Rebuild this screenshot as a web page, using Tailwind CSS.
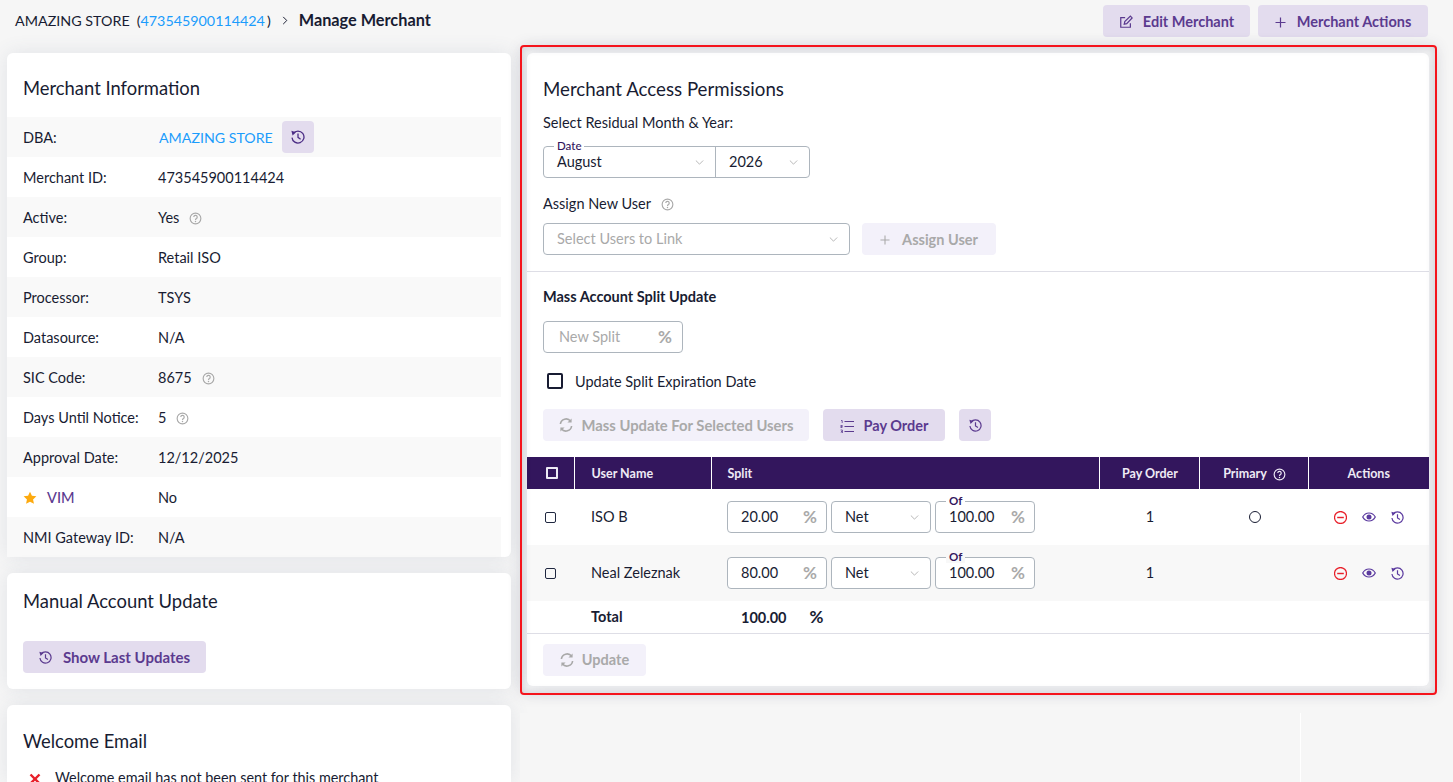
<!DOCTYPE html>
<html>
<head>
<meta charset="utf-8">
<script src="https://cdn.jsdelivr.net/npm/@tailwindcss/browser@4"></script>
</head>
<body class="m-0 h-[782px] overflow-hidden bg-[#f6f6f6] font-['Lato',sans-serif] text-[14.5px] text-[#181c32]">
<svg width="0" height="0" class="absolute">
<defs>
<symbol id="hist" viewBox="1 1 14 14"><path d="M3.200 4.400A6 6 0 1 1 2 8.600" fill="none" stroke="currentColor" stroke-width="1.300"/><path d="M1.400 1.800l4.600 1.400-3.400 3.200z" fill="currentColor"/><path d="M8 4.600v3.800l2.600 1.800" fill="none" stroke="currentColor" stroke-width="1.300"/></symbol>
<symbol id="help" viewBox="0 0 16 16"><circle cx="8" cy="8" r="6.600" fill="none" stroke="currentColor" stroke-width="1.400"/><path d="M5.900 6.200a2.100 2.100 0 1 1 3.300 1.800c-.8.500-1.200.9-1.200 1.700" fill="none" stroke="currentColor" stroke-width="1.400"/><circle cx="8" cy="11.700" r=".9" fill="currentColor"/></symbol>
<symbol id="chev" viewBox="0 0 10 6"><path d="M.6.600 5 5 9.400.6" fill="none" stroke="currentColor" stroke-width="1"/></symbol>
<symbol id="sync" viewBox="1 1 14 14"><path d="M2.400 7A5.700 5.700 0 0 1 12.600 4.200M13.600 9a5.700 5.700 0 0 1-10.200 2.800" fill="none" stroke="currentColor" stroke-width="1.600"/><path d="M13.600 1.400v4.200H9.400zM2.400 14.600v-4.200h4.200z" fill="currentColor"/></symbol>
<symbol id="minus" viewBox="0.700 0.700 12.600 12.600"><circle cx="7" cy="7" r="5.800" fill="none" stroke="currentColor" stroke-width="1.200"/><path d="M3.800 7h6.400" stroke="currentColor" stroke-width="1.400"/></symbol>
<symbol id="eye" viewBox="0 0 14 10"><path d="M.7 5C2.200 2.300 4.400 1 7 1s4.800 1.300 6.300 4C11.800 7.700 9.600 9 7 9S2.200 7.700.7 5z" fill="none" stroke="currentColor" stroke-width="1.200"/><circle cx="7" cy="5" r="2.500" fill="currentColor"/></symbol>
</defs>
</svg>

<header class="flex h-[53px] items-start justify-between pl-[15px] pr-[25px]">
  <div class="flex h-[41px] items-center text-[14.300px]">
    <span>AMAZING STORE</span><span class="ml-[7px]">(</span><span class="text-[#1b9cfc]">473545900114424</span><span class="ml-[2px]">)</span>
    <svg class="mx-[11px] h-[9px] w-[6px] text-[#181c32]" viewBox="0 0 6 10"><path d="M1 1l4 4-4 4" fill="none" stroke="currentColor" stroke-width="1.100"/></svg>
    <span class="text-[16.300px] font-bold">Manage Merchant</span>
  </div>
  <div class="mt-[5px] flex gap-2">
    <button class="flex h-[32px] w-[147px] items-center justify-center gap-[10px] rounded-[4px] bg-[#e3dcee] pt-[2px] font-bold text-[#5b3a8f]">
      <svg class="h-[14px] w-[14px]" viewBox="0 0 16 16" fill="none" stroke="currentColor" stroke-width="1.400"><path d="M13 9.500V14H2V3h5"/><path d="M6 10.500l.6-3L13 1.300l2 2L8.800 9.800z"/></svg>
      Edit Merchant</button>
    <button class="flex h-[32px] w-[170px] items-center justify-center gap-[11px] rounded-[4px] bg-[#e3dcee] pt-[2px] font-bold text-[#5b3a8f]">
      <svg class="h-[11px] w-[11px]" viewBox="0 0 11 11" stroke="currentColor" stroke-width="1.200"><path d="M5.500.5v10M.5 5.500h10"/></svg>
      Merchant Actions</button>
  </div>
</header>

<main class="grid grid-cols-[504px_902px] gap-4 pl-[7px]">
  <div class="flex flex-col gap-4">
    <section class="h-[504px] rounded-[6px] bg-white shadow-[0_0_20px_rgba(76,87,125,0.12)]">
      <h2 class="flex h-[64px] items-center pl-4 pt-[8px] text-[18.400px] font-normal">Merchant Information</h2>
      <div class="mr-[10px]">
        <div class="flex h-[40px] items-center bg-[#f9f9f9] pl-4 pt-[2px]"><span class="w-[136px]">DBA:</span><span class="text-[14.200px] text-[#1b9cfc]">AMAZING STORE</span><span class="-mt-[2px] ml-[9px] flex h-[32px] w-[32px] items-center justify-center rounded-[4px] bg-[#e3dcee] text-[#4b2c85]"><svg class="h-[14px] w-[14px]"><use href="#hist"/></svg></span></div>
        <div class="flex h-[40px] items-center pl-4 pt-[2px]"><span class="w-[135px]">Merchant ID:</span><span>473545900114424</span></div>
        <div class="flex h-[40px] items-center bg-[#f9f9f9] pl-4 pt-[2px]"><span class="w-[135px]">Active:</span><span>Yes</span><svg class="ml-[10px] h-[13px] w-[13px] text-[#a9a9a9]"><use href="#help"/></svg></div>
        <div class="flex h-[40px] items-center pl-4 pt-[2px]"><span class="w-[135px]">Group:</span><span>Retail ISO</span></div>
        <div class="flex h-[40px] items-center bg-[#f9f9f9] pl-4 pt-[2px]"><span class="w-[135px]">Processor:</span><span>TSYS</span></div>
        <div class="flex h-[40px] items-center pl-4 pt-[2px]"><span class="w-[135px]">Datasource:</span><span>N/A</span></div>
        <div class="flex h-[40px] items-center bg-[#f9f9f9] pl-4 pt-[2px]"><span class="w-[135px]">SIC Code:</span><span>8675</span><svg class="ml-[10px] h-[13px] w-[13px] text-[#a9a9a9]"><use href="#help"/></svg></div>
        <div class="flex h-[40px] items-center pl-4 pt-[2px]"><span class="w-[135px]">Days Until Notice:</span><span>5</span><svg class="ml-[10px] h-[13px] w-[13px] text-[#a9a9a9]"><use href="#help"/></svg></div>
        <div class="flex h-[40px] items-center bg-[#f9f9f9] pl-4 pt-[2px]"><span class="w-[135px]">Approval Date:</span><span>12/12/2025</span></div>
        <div class="flex h-[40px] items-center pl-4 pt-[2px]"><span class="flex w-[135px] items-center gap-[10px] font-medium text-[#5b3a8f]"><svg class="h-[14px] w-[14px] text-[#fdaa0f]" viewBox="0 0 16 16"><path d="M8 .8l2.200 4.700 5.100.6-3.800 3.500 1 5.100L8 12.200l-4.500 2.500 1-5.100L.7 6.100l5.100-.6z" fill="currentColor"/></svg>VIM</span><span>No</span></div>
        <div class="flex h-[40px] items-center bg-[#f9f9f9] pl-4 pt-[2px]"><span class="w-[135px]">NMI Gateway ID:</span><span>N/A</span></div>
      </div>
    </section>
    <section class="h-[116px] rounded-[6px] bg-white pl-4 shadow-[0_0_20px_rgba(76,87,125,0.12)]">
      <h2 class="flex h-[56px] items-center pt-[2px] text-[18.400px] font-normal">Manual Account Update</h2>
      <button class="mt-[12px] flex h-[32px] w-[183px] items-center justify-center gap-[11px] rounded-[4px] bg-[#e3dcee] text-[15px] font-bold text-[#5b3a8f]"><svg class="h-[13px] w-[13px]"><use href="#hist"/></svg>Show Last Updates</button>
    </section>
    <section class="h-[77px] overflow-hidden rounded-t-[6px] bg-white pl-4 shadow-[0_0_20px_rgba(76,87,125,0.12)]">
      <h2 class="flex h-[64px] items-center pt-[10px] text-[18.400px] font-normal">Welcome Email</h2>
      <div class="flex h-[13px] items-start gap-[14px] pl-[6px]">
        <svg class="mt-[4px] h-[12px] w-[12px] shrink-0 text-[#e8202a]" viewBox="0 0 12 12"><path d="M1.500 1.500l9 9m0-9l-9 9" stroke="currentColor" stroke-width="2.400"/></svg>
        <span class="pt-[1px] text-[14.400px] leading-[16px]">Welcome email has not been sent for this merchant</span>
      </div>
    </section>
  </div>

  <section class="h-[633px] rounded-[6px] bg-white shadow-[0_0_20px_rgba(76,87,125,0.12)]">
    <div class="px-4">
      <h2 class="flex h-[64px] items-center pt-[8px] text-[18.700px] font-normal">Merchant Access Permissions</h2>
      <p class="-mt-[5px] flex h-[20px] items-center pt-[2px]">Select Residual Month &amp; Year:</p>
      <div class="relative mt-[14px] flex h-[32px] w-[267px] rounded-[4px] border border-[#adb5bd]">
        <span class="absolute -top-[7px] left-[10px] bg-white px-[3px] text-[11.500px] leading-[12px] font-medium text-[#33165d]">Date</span>
        <div class="flex w-[172px] items-center justify-between border-r border-[#adb5bd] pl-[13px] pr-[11px]"><span>August</span><svg class="h-[5px] w-[9px] text-[#a9a9a9]"><use href="#chev"/></svg></div>
        <div class="flex flex-1 items-center justify-between pl-[13px] pr-[11px]"><span>2026</span><svg class="h-[5px] w-[9px] text-[#a9a9a9]"><use href="#chev"/></svg></div>
      </div>
      <p class="mt-[15px] flex h-[20px] items-center pt-[2px]">Assign New User<svg class="ml-[10px] h-[13px] w-[13px] text-[#a9a9a9]"><use href="#help"/></svg></p>
      <div class="mt-[10px] flex gap-3">
        <div class="flex h-[32px] w-[307px] items-center justify-between rounded-[4px] border border-[#adb5bd] pl-[13px] pr-[11px] text-[#a9a9a9]"><span>Select Users to Link</span><svg class="h-[5px] w-[9px]"><use href="#chev"/></svg></div>
        <button class="flex h-[32px] w-[134px] items-center justify-center gap-[12px] rounded-[4px] bg-[#f3f1fa] pt-[2px] font-bold text-[#a9a9a9]"><svg class="h-[10px] w-[10px]" viewBox="0 0 11 11" stroke="currentColor" stroke-width="1.200"><path d="M5.500.5v10M.5 5.500h10"/></svg>Assign User</button>
      </div>
    </div>
    <div class="mt-[16px] h-px bg-[#dedee6]"></div>
    <div class="px-4">
      <p class="mt-[15px] flex h-[20px] items-center font-bold">Mass Account Split Update</p>
      <div class="mt-[14px] flex h-[32px] w-[140px] items-center justify-between rounded-[4px] border border-[#adb5bd] pl-[15px] pr-[10px] text-[#a9a9a9]"><span>New Split</span><span class="text-[17px] font-bold">%</span></div>
      <label class="mt-[18px] flex h-[20px] items-center"><span class="ml-[4px] h-[16px] w-[16px] rounded-[2px] border-2 border-[#181c32]"></span><span class="ml-[12px] pt-[1px]">Update Split Expiration Date</span></label>
      <div class="mt-[18px] flex gap-[14px]">
        <button class="flex h-[32px] w-[266px] items-center justify-center gap-[9px] rounded-[4px] bg-[#f3f1fa] text-[14.800px] font-bold text-[#a9a9a9]"><svg class="h-[14px] w-[14px]"><use href="#sync"/></svg>Mass Update For Selected Users</button>
        <button class="flex h-[32px] w-[122px] items-center justify-center gap-[10px] rounded-[4px] bg-[#e3dcee] pt-[2px] font-bold text-[#5b3a8f]"><svg class="h-[13px] w-[14px]" viewBox="0 0 14 13" fill="none" stroke="currentColor"><path d="M4.500 1.500H14M4.500 6.500H14M4.500 11.500H14" stroke-width="1.100"/><path d="M1 .5h1.200v2.500M.5 5.500h1.800v1H.8v1h1.600M.6 10h1.800v3H.6M1 11.500h1.200" stroke-width=".8"/></svg>Pay Order</button>
        <button class="flex h-[32px] w-[32px] items-center justify-center rounded-[4px] bg-[#e3dcee] text-[#5b3a8f]"><svg class="h-[13px] w-[13px]"><use href="#hist"/></svg></button>
      </div>
    </div>
    <table class="mt-[16px] w-full table-fixed border-collapse">
      <colgroup><col class="w-[47px]"><col class="w-[137px]"><col class="w-[388px]"><col class="w-[100px]"><col class="w-[109px]"><col></colgroup>
      <thead>
        <tr class="h-[32px] bg-[#33165d] text-[12.500px] font-bold text-[#eeeaf5]">
          <th class="p-0"><span class="ml-[19px] block h-[12px] w-[12px] rounded-[1px] border-2 border-[#eeeaf5]"></span></th>
          <th class="border-l border-white pl-[17px] pt-[2px] text-left">User Name</th>
          <th class="border-l border-white pl-4 pt-[2px] text-left">Split</th>
          <th class="border-l border-white pl-[2px] pt-[2px] text-center">Pay Order</th>
          <th class="border-l border-white pl-[2px] pt-[2px] text-center"><span class="inline-flex items-center gap-[6px]">Primary<svg class="h-[13px] w-[13px]"><use href="#help"/></svg></span></th>
          <th class="border-l border-white pt-[2px] text-center">Actions</th>
        </tr>
      </thead>
      <tbody>
        <tr class="h-[56px]">
          <td class="p-0"><span class="ml-[18px] block h-[11px] w-[11px] rounded-[2px] border-[1.500px] border-[#1f2740]"></span></td>
          <td class="pl-[17px]">ISO B</td>
          <td class="pl-4">
            <div class="flex gap-[4px]">
              <div class="flex h-[32px] w-[100px] items-center justify-between rounded-[4px] border border-[#adb5bd] pl-[13px] pr-[9px]"><span>20.00</span><span class="text-[17px] font-bold text-[#a9a9a9]">%</span></div>
              <div class="flex h-[32px] w-[100px] items-center justify-between rounded-[4px] border border-[#adb5bd] pl-[13px] pr-[11px]"><span>Net</span><svg class="h-[5px] w-[9px] text-[#a9a9a9]"><use href="#chev"/></svg></div>
              <div class="relative flex h-[32px] w-[100px] items-center justify-between rounded-[4px] border border-[#adb5bd] pl-[13px] pr-[9px]"><span class="absolute -top-[7px] left-[10px] bg-white px-[3px] text-[11.500px] leading-[12px] font-bold text-[#33165d]">Of</span><span>100.00</span><span class="text-[17px] font-bold text-[#a9a9a9]">%</span></div>
            </div>
          </td>
          <td class="pl-[2px] text-center">1</td>
          <td class="pl-[2px] text-center"><span class="mx-auto block h-[12px] w-[12px] rounded-full border border-[#181c32]"></span></td>
          <td class="p-0"><div class="flex items-center gap-[15px] pl-[26px]"><svg class="h-[13px] w-[13px] text-[#e8202a]"><use href="#minus"/></svg><svg class="h-[10px] w-[14px] text-[#5b3a9f]"><use href="#eye"/></svg><svg class="h-[13px] w-[13px] text-[#5b3a9f]"><use href="#hist"/></svg></div></td>
        </tr>
        <tr class="h-[56px] bg-[#f8f8f8]">
          <td class="p-0"><span class="ml-[18px] block h-[11px] w-[11px] rounded-[2px] border-[1.500px] border-[#1f2740]"></span></td>
          <td class="pl-[17px]">Neal Zeleznak</td>
          <td class="pl-4">
            <div class="flex gap-[4px]">
              <div class="flex h-[32px] w-[100px] items-center justify-between rounded-[4px] border border-[#adb5bd] bg-white pl-[13px] pr-[9px]"><span>80.00</span><span class="text-[17px] font-bold text-[#a9a9a9]">%</span></div>
              <div class="flex h-[32px] w-[100px] items-center justify-between rounded-[4px] border border-[#adb5bd] bg-white pl-[13px] pr-[11px]"><span>Net</span><svg class="h-[5px] w-[9px] text-[#a9a9a9]"><use href="#chev"/></svg></div>
              <div class="relative flex h-[32px] w-[100px] items-center justify-between rounded-[4px] border border-[#adb5bd] bg-white pl-[13px] pr-[9px]"><span class="absolute -top-[7px] left-[10px] bg-[#f8f8f8] px-[3px] text-[11.500px] leading-[12px] font-bold text-[#33165d]">Of</span><span>100.00</span><span class="text-[17px] font-bold text-[#a9a9a9]">%</span></div>
            </div>
          </td>
          <td class="pl-[2px] text-center">1</td>
          <td></td>
          <td class="p-0"><div class="flex items-center gap-[15px] pl-[26px]"><svg class="h-[13px] w-[13px] text-[#e8202a]"><use href="#minus"/></svg><svg class="h-[10px] w-[14px] text-[#5b3a9f]"><use href="#eye"/></svg><svg class="h-[13px] w-[13px] text-[#5b3a9f]"><use href="#hist"/></svg></div></td>
        </tr>
        <tr class="h-[32px] border-b border-[#dedee6] font-bold">
          <td></td>
          <td class="pl-[17px]">Total</td>
          <td class="pl-[30px]"><span>100.00</span><span class="ml-[23px] text-[17px]">%</span></td>
          <td></td><td></td><td></td>
        </tr>
      </tbody>
    </table>
    <div class="px-4 pt-[10px]">
      <button class="flex h-[32px] w-[103px] items-center justify-center gap-[8px] rounded-[4px] bg-[#f3f1fa] font-bold text-[#a9a9a9]"><svg class="h-[14px] w-[14px]"><use href="#sync"/></svg>Update</button>
    </div>
  </section>
</main>

<div class="pointer-events-none absolute left-[520px] top-[45px] h-[650px] w-[917px] rounded-[4px] border-2 border-[#f5141c] shadow-[0_0_14px_rgba(60,60,90,0.13),inset_0_0_8px_rgba(60,60,90,0.22)]"></div>
<div class="absolute left-[520px] top-[713px] h-[69px] w-[933px] bg-[#f6f6f6]"><div class="ml-[780px] h-full w-px bg-white"></div></div>
</body>
</html>
